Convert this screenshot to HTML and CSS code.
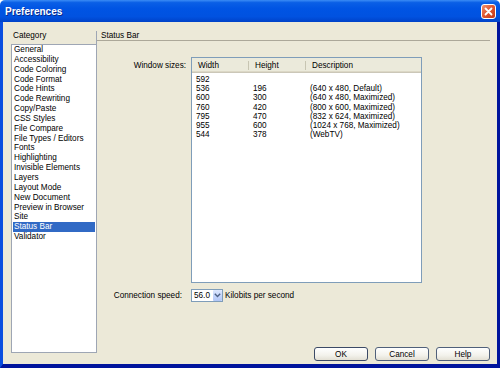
FILE: index.html
```html
<!DOCTYPE html>
<html>
    <head>
        <title>Preferences</title>
        <link rel="stylesheet" href="styles.css">
    </head>
    <body>
        <div class="window">
            <div class="titlebar">
                <span class="title">Preferences</span>
                <span class="close-btn">
                    <svg width="13" height="13" viewBox="0 0 13 13">
                        <path d="M3.5 3.5l6 6M9.5 3.5l-6 6" stroke="#fff" stroke-width="1.8" stroke-linecap="round"/>
                    </svg>
                </span>
            </div>
            <div class="frame">
                <div class="category">
                    <div class="category-label">Category</div>
                    <ul class="category-list">
                        <li>General</li>
                        <li>Accessibility</li>
                        <li>Code Coloring</li>
                        <li>Code Format</li>
                        <li>Code Hints</li>
                        <li>Code Rewriting</li>
                        <li>Copy/Paste</li>
                        <li>CSS Styles</li>
                        <li>File Compare</li>
                        <li>File Types / Editors</li>
                        <li>Fonts</li>
                        <li>Highlighting</li>
                        <li>Invisible Elements</li>
                        <li>Layers</li>
                        <li>Layout Mode</li>
                        <li>New Document</li>
                        <li>Preview in Browser</li>
                        <li>Site</li>
                        <li class="selected">Status Bar</li>
                        <li>Validator</li>
                    </ul>
                </div>
                <div class="pane">
                    <div class="pane-title">Status Bar</div>
                    <div class="form">
                        <div class="form-label">Window sizes:</div>
                        <div class="sizes-box">
                            <table class="sizes">
                                <thead>
                                    <tr>
                                        <th class="col-w">Width</th>
                                        <th class="col-h">Height</th>
                                        <th>Description</th>
                                    </tr>
                                </thead>
                                <tbody>
                                    <tr><td>592</td><td></td><td></td></tr>
                                    <tr><td>536</td><td>196</td><td>(640 x 480, Default)</td></tr>
                                    <tr><td>600</td><td>300</td><td>(640 x 480, Maximized)</td></tr>
                                    <tr><td>760</td><td>420</td><td>(800 x 600, Maximized)</td></tr>
                                    <tr><td>795</td><td>470</td><td>(832 x 624, Maximized)</td></tr>
                                    <tr><td>955</td><td>600</td><td>(1024 x 768, Maximized)</td></tr>
                                    <tr><td>544</td><td>378</td><td>(WebTV)</td></tr>
                                </tbody>
                            </table>
                        </div>
                        <div class="form-label speed-label">Connection speed:</div>
                        <div class="speed">
                            <div class="select">
                                <span class="select-value">56.0</span>
                                <span class="select-btn">
                                    <svg width="7" height="5" viewBox="0 0 7 5">
                                        <path d="M0.8 0.8l2.7 2.7 2.7-2.7" fill="none" stroke="#4d6185" stroke-width="1.4"/>
                                    </svg>
                                </span>
                            </div>
                            <span>Kilobits per second</span>
                        </div>
                    </div>
                    <div class="buttons">
                        <button class="btn btn-default">OK</button>
                        <button class="btn">Cancel</button>
                        <button class="btn">Help</button>
                    </div>
                </div>
            </div>
        </div>
    </body>
</html>
```

FILE: styles.css
```css
body {
    margin: 0;
    font-family: "Liberation Sans", Arial, sans-serif;
    font-size: 8.2px;
    color: #000;
    background: #fff;
}

.window {
    width: 500px;
    height: 368px;
    display: flex;
    flex-direction: column;
}

.titlebar {
    height: 22px;
    display: flex;
    align-items: center;
    padding-left: 5px;
    border-radius: 5px 5px 0 0;
    background: linear-gradient(#3b8cf5 0%, #0a5fe6 12%, #0054e3 40%, #0152e0 75%, #0042c8 100%);
}

.title {
    font-size: 10px;
    font-weight: bold;
    color: #fff;
    text-shadow: 1px 1px 0 #0a2a8a;
}

.close-btn {
    margin-left: auto;
    margin-right: 4px;
    width: 13px;
    height: 13px;
    border: 1px solid #fff;
    border-radius: 3px;
    background: linear-gradient(135deg, #f0906c, #e0552e 50%, #c2381a);
    display: flex;
}

.frame {
    flex: 1;
    display: flex;
    background: #ece9d8;
    border-left: 3px solid #0a4ee0;
    border-right: 3px solid #00149c;
    border-bottom: 4px solid #00149c;
    padding: 9px 0 0 8px;
    min-height: 0;
}

.category {
    width: 86px;
}

.category-label {
    height: 13px;
    box-sizing: border-box;
    line-height: 10px;
    padding-left: 2px;
    border-right: 1px solid #9ea6b4;
}

.category-list {
    list-style: none;
    margin: 0;
    padding: 0;
    height: 309px;
    box-sizing: border-box;
    background: #fff;
    border: 1px solid #9ea6b4;
}

.category-list li {
    line-height: 9.85px;
    margin: 0 1px;
    padding-left: 1px;
    white-space: nowrap;
}

.category-list li.selected {
    background: #316ac5;
    color: #fff;
}

.pane {
    flex: 1;
    display: flex;
    flex-direction: column;
    padding: 0 7px 3px 0;
}

.pane-title {
    line-height: 9px;
    padding-left: 4px;
    border-bottom: 1px solid #aca899;
}

.form {
    display: grid;
    grid-template-columns: 89px 231px;
    column-gap: 5px;
    row-gap: 6px;
    margin-top: 16px;
}

.form-label {
    text-align: right;
    line-height: 10px;
    padding-top: 4px;
}

.speed-label {
    padding: 0 4px 0 0;
    align-self: center;
}

.sizes-box {
    height: 226px;
    box-sizing: border-box;
    border: 1px solid #7f9db9;
    background: #fff;
}

.sizes {
    width: 100%;
    border-collapse: separate;
    border-spacing: 0;
    table-layout: fixed;
}

.sizes th {
    font-weight: normal;
    text-align: left;
    line-height: 10px;
    padding: 3px 0 1px 6px;
    background: #ebeadb;
    border-bottom: 1px solid #cbc7b8;
    box-shadow: inset 0 -1px #dcd8c6;
}

.sizes th.col-w,
.sizes th.col-h {
    width: 57px;
    box-sizing: border-box;
    background: linear-gradient(#c7c5b2, #c7c5b2) right 3px / 1px 9px no-repeat, #ebeadb;
}

.sizes td {
    line-height: 9.17px;
    padding: 0 0 0 4px;
    white-space: nowrap;
}

.sizes tbody tr:first-child td {
    padding-top: 2px;
}

.speed {
    display: flex;
    align-items: center;
    gap: 2px;
    height: 13px;
}

.select {
    width: 32px;
    height: 13px;
    box-sizing: border-box;
    border: 1px solid #7f9db9;
    background: #fff;
    display: flex;
    align-items: center;
}

.select-value {
    flex: 1;
    padding-left: 2px;
}

.select-btn {
    width: 9px;
    height: 11px;
    display: flex;
    align-items: center;
    justify-content: center;
    border-radius: 1px;
    background: linear-gradient(#dce7fd, #c1d3fb 60%, #b1c6f6);
}

.buttons {
    margin-top: auto;
    display: flex;
    justify-content: flex-end;
    gap: 7px;
}

.btn {
    width: 54px;
    height: 14px;
    padding: 0;
    font-family: "Liberation Sans", Arial, sans-serif;
    font-size: 8.2px;
    color: #000;
    border: 1px solid #50607a;
    border-radius: 3px;
    background: linear-gradient(#ffffff, #f3f2ec 60%, #e3e0d4);
}

.btn-default {
    border-color: #3c4a66;
}
```
